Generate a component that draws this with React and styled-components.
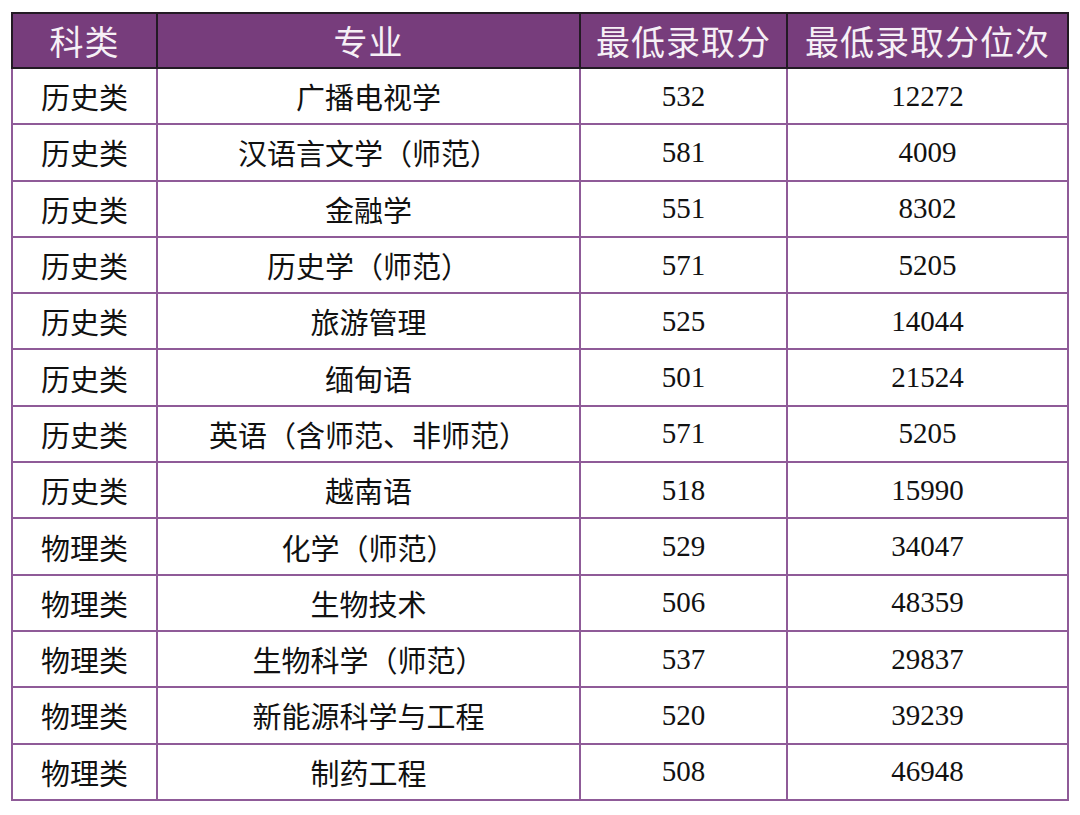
import React from "react";
import styled, { createGlobalStyle } from "styled-components";

const rows = [
  ["历史类", "广播电视学", "532", "12272"],
  ["历史类", "汉语言文学（师范）", "581", "4009"],
  ["历史类", "金融学", "551", "8302"],
  ["历史类", "历史学（师范）", "571", "5205"],
  ["历史类", "旅游管理", "525", "14044"],
  ["历史类", "缅甸语", "501", "21524"],
  ["历史类", "英语（含师范、非师范）", "571", "5205"],
  ["历史类", "越南语", "518", "15990"],
  ["物理类", "化学（师范）", "529", "34047"],
  ["物理类", "生物技术", "506", "48359"],
  ["物理类", "生物科学（师范）", "537", "29837"],
  ["物理类", "新能源科学与工程", "520", "39239"],
  ["物理类", "制药工程", "508", "46948"],
];

const GlobalStyle = createGlobalStyle`
  html, body {
    margin: 0;
    padding: 0;
    background: #ffffff;
  }
`;

const Page = styled.div`
  padding: 12px 0 0 11px;
  font-family: "Liberation Serif", "Noto Sans CJK SC", serif;
`;

const Table = styled.table`
  border-collapse: collapse;
  table-layout: fixed;
  width: 1056px;
`;

const HeadCell = styled.th`
  height: 53px;
  padding: 0;
  background: #773d7c;
  color: #f6f0f6;
  font-family: "Noto Sans CJK SC", sans-serif;
  font-weight: 400;
  font-size: 34px;
  letter-spacing: 1px;
  text-align: center;
  border: 2px solid #231a24;
`;

const Row = styled.tr`
  height: 56.3px;
`;

const Cell = styled.td`
  padding: 0;
  text-align: center;
  color: #111;
  font-size: 29px;
  font-family: ${({ $num }) =>
    $num ? `"Liberation Serif", serif` : `"Noto Sans CJK SC", sans-serif`};
  border: 2px solid #8f5b98;
`;

export default function App() {
  return (
    <Page>
      <GlobalStyle />
      <Table>
        <colgroup>
          <col style={{ width: 145 }} />
          <col style={{ width: 423 }} />
          <col style={{ width: 207 }} />
          <col style={{ width: 281 }} />
        </colgroup>
        <thead>
          <tr>
            <HeadCell>科类</HeadCell>
            <HeadCell>专业</HeadCell>
            <HeadCell>最低录取分</HeadCell>
            <HeadCell>最低录取分位次</HeadCell>
          </tr>
        </thead>
        <tbody>
          {rows.map((r, i) => (
            <Row key={i}>
              <Cell>{r[0]}</Cell>
              <Cell>{r[1]}</Cell>
              <Cell $num>{r[2]}</Cell>
              <Cell $num>{r[3]}</Cell>
            </Row>
          ))}
        </tbody>
      </Table>
    </Page>
  );
}
